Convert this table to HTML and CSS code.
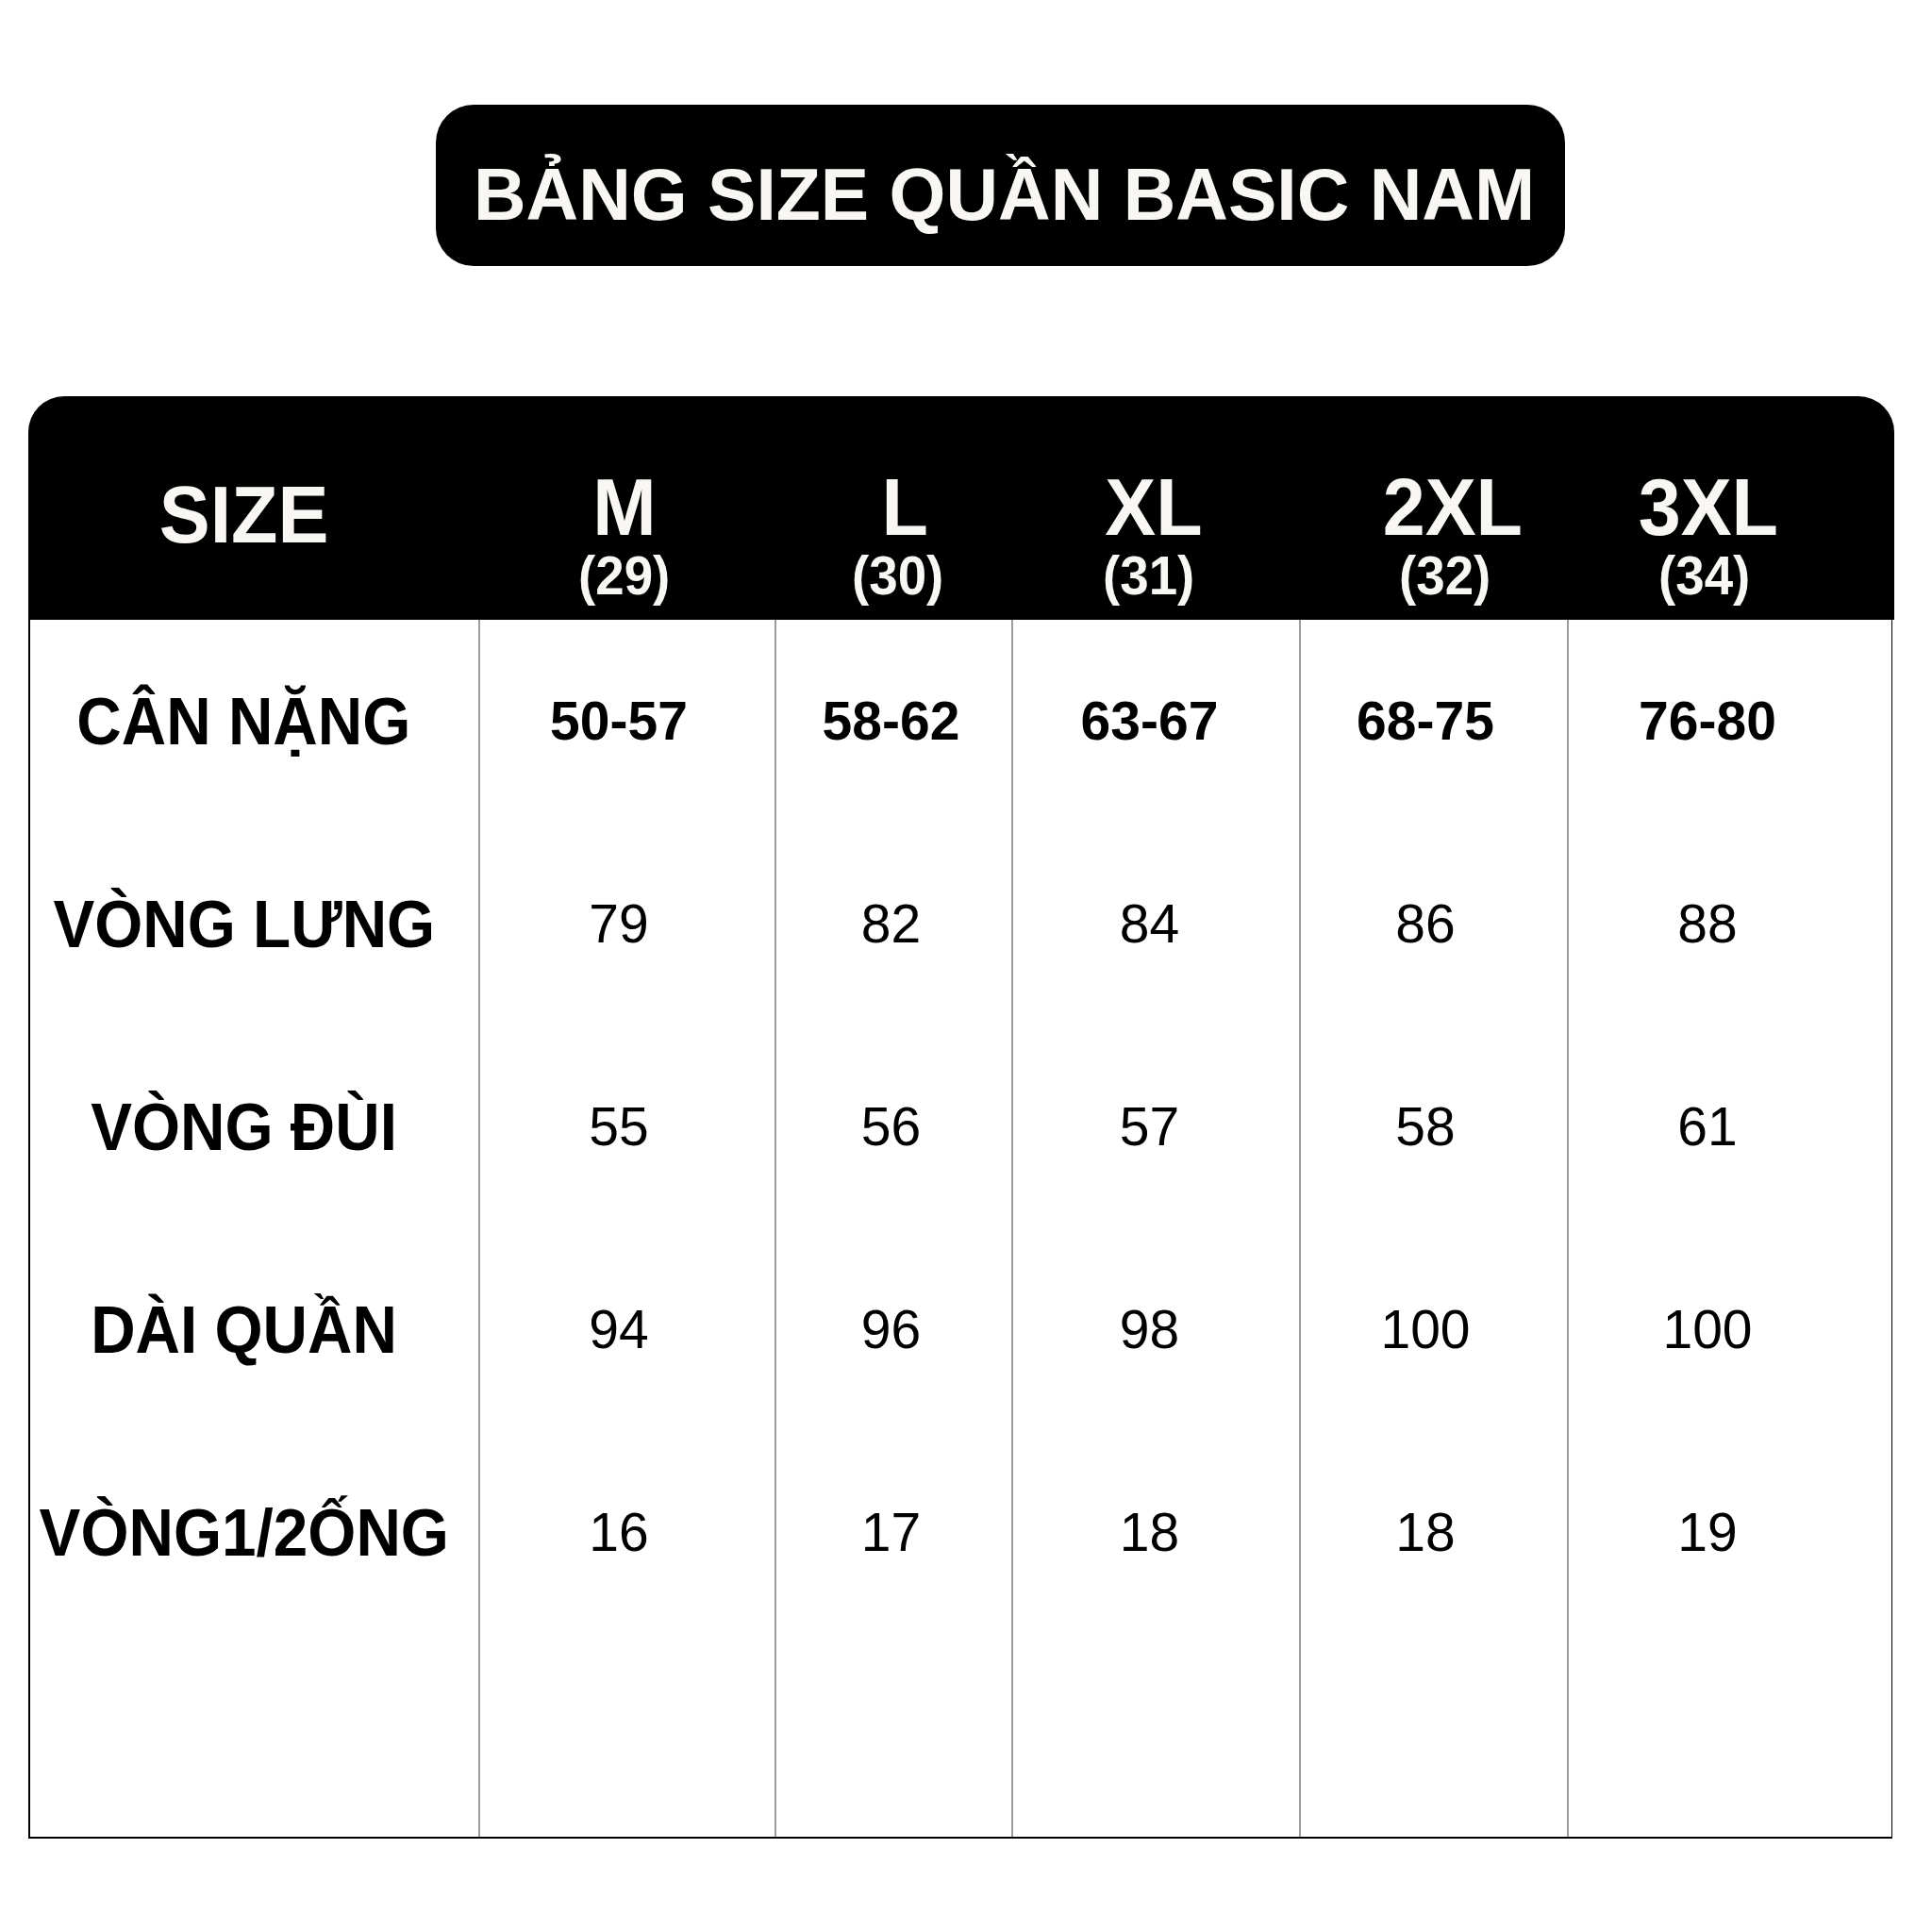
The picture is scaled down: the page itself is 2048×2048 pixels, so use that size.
FILE: index.html
```html
<!DOCTYPE html>
<html lang="vi">
<head>
<meta charset="utf-8">
<title>Bảng size quần basic nam</title>
<link rel="stylesheet" href="styles.css">
</head>
<body>
<div class="page">
  <div class="title-pill"><h1 class="title">BẢNG SIZE QUẦN BASIC NAM</h1></div>

  <div class="table">
    <div class="thead">
      <div class="hcell hcell-size"><span class="hlabel">SIZE</span></div>
      <div class="hcell"><span class="hlabel">M</span><span class="hsub">(29)</span></div>
      <div class="hcell hcell-l"><span class="hlabel">L</span><span class="hsub">(30)</span></div>
      <div class="hcell hcell-xl"><span class="hlabel">XL</span><span class="hsub">(31)</span></div>
      <div class="hcell hcell-2xl"><span class="hlabel">2XL</span><span class="hsub">(32)</span></div>
      <div class="hcell hcell-3xl"><span class="hlabel">3XL</span><span class="hsub">(34)</span></div>
    </div>

    <div class="tbody">
      <div class="cell rlabel"><span class="rtext">CÂN NẶNG</span></div>
      <div class="cell c1 bold">50-57</div>
      <div class="cell c2 bold">58-62</div>
      <div class="cell c3 bold">63-67</div>
      <div class="cell c4 bold">68-75</div>
      <div class="cell c5 bold">76-80</div>

      <div class="cell rlabel"><span class="rtext">VÒNG LƯNG</span></div>
      <div class="cell c1">79</div>
      <div class="cell c2">82</div>
      <div class="cell c3">84</div>
      <div class="cell c4">86</div>
      <div class="cell c5">88</div>

      <div class="cell rlabel"><span class="rtext">VÒNG ĐÙI</span></div>
      <div class="cell c1">55</div>
      <div class="cell c2">56</div>
      <div class="cell c3">57</div>
      <div class="cell c4">58</div>
      <div class="cell c5">61</div>

      <div class="cell rlabel"><span class="rtext">DÀI QUẦN</span></div>
      <div class="cell c1">94</div>
      <div class="cell c2">96</div>
      <div class="cell c3">98</div>
      <div class="cell c4">100</div>
      <div class="cell c5">100</div>

      <div class="cell rlabel"><span class="rtext">VÒNG1/2ỐNG</span></div>
      <div class="cell c1">16</div>
      <div class="cell c2">17</div>
      <div class="cell c3">18</div>
      <div class="cell c4">18</div>
      <div class="cell c5">19</div>

      <div class="cell rlabel"></div>
      <div class="cell c1"></div>
      <div class="cell c2"></div>
      <div class="cell c3"></div>
      <div class="cell c4"></div>
      <div class="cell c5"></div>
    </div>
  </div>
</div>
</body>
</html>
```

FILE: styles.css
```css
html, body {
  margin: 0;
  padding: 0;
  background: #ffffff;
}

body {
  font-family: "Liberation Sans", Arial, Helvetica, sans-serif;
  color: #000;
  width: 2048px;
  height: 2048px;
}

.page {
  padding-top: 111px;
}

.title-pill {
  margin-left: 462px;
  width: 1197px;
  height: 171px;
  background: #000;
  border-radius: 40px;
  display: flex;
  align-items: center;
  justify-content: center;
  box-sizing: border-box;
  padding-top: 20px;
}

.title {
  margin: 0;
  padding-left: 8px;
  font-size: 77px;
  font-weight: 700;
  line-height: 1;
  color: #f8f7f3;
  white-space: nowrap;
}

.table {
  margin-top: 138px;
  margin-left: 30px;
  width: 1978px;
}

.thead {
  height: 237px;
  background: #000;
  border-radius: 38px 38px 0 0;
  display: grid;
  grid-template-columns: 475px 314px 251px 305px 284px 349px;
  color: #f8f7f3;
}

.hcell {
  display: flex;
  flex-direction: column;
  align-items: center;
  padding-top: 74px;
  font-weight: 700;
}

.hlabel {
  display: block;
  font-size: 86px;
  line-height: 86px;
  height: 86px;
  transform: scaleX(0.94);
}

.hsub {
  display: block;
  margin-top: 2px;
  font-size: 57px;
  line-height: 57px;
  transform: scaleX(0.96);
}

.hcell-size {
  padding-top: 82px;
  padding-right: 17px;
}

.hcell-l .hlabel { margin-left: 30px; }
.hcell-l .hsub { margin-left: 14px; }
.hcell-xl .hsub { margin-right: 10px; }
.hcell-2xl .hlabel { margin-left: 46px; }
.hcell-2xl .hsub { margin-left: 30px; }
.hcell-3xl .hlabel { margin-right: 46px; }
.hcell-3xl .hsub { margin-right: 54px; }

.tbody {
  display: grid;
  grid-template-columns: 475px 314px 251px 305px 284px 346px;
  grid-auto-rows: 215px;
  border-left: 2px solid #000;
  border-right: 1px solid #000;
  border-bottom: 2px solid #000;
  margin-right: 2px;
  box-sizing: border-box;
}

.cell {
  display: flex;
  align-items: center;
  justify-content: center;
  font-size: 57px;
  line-height: 1;
  border-left: 2px solid #9c9c9c;
}

.rlabel {
  border-left: none;
  padding-right: 22px;
  font-size: 71px;
  font-weight: 700;
}

.rtext {
  display: inline-block;
  white-space: nowrap;
  transform: scaleX(0.925);
}

.bold {
  font-weight: 700;
}

.c1 { padding-right: 18px; }
.c2 { padding-right: 6px; }
.c3 { padding-right: 14px; }
.c4 { padding-right: 18px; }
.c5 { padding-right: 50px; }
```
